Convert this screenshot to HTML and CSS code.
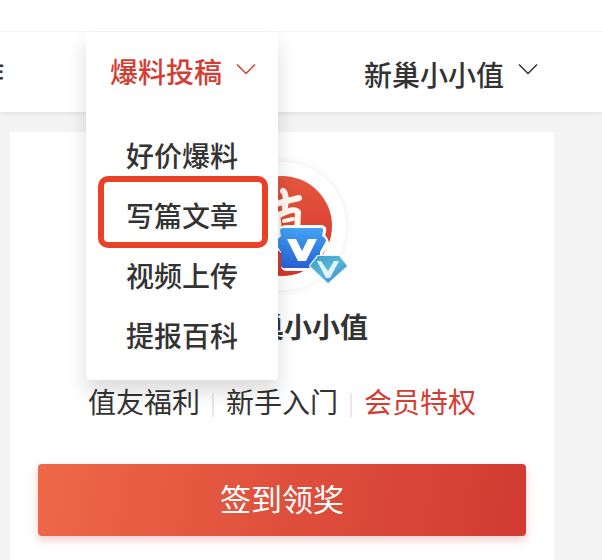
FILE: index.html
```html
<!DOCTYPE html>
<html lang="zh-CN">
<head>
<meta charset="utf-8">
<title>新巢小小值</title>
<link rel="stylesheet" href="styles.css">
</head>
<body>
<div class="topbar"></div>
<header class="header">
  <nav class="nav">
    <a class="nav-cut" href="#">合作</a>
    <div class="menu">
      <button class="menu-trigger" type="button">爆料投稿
        <svg class="chevron" viewBox="0 0 20 12"><path d="M1 1.500 10 10.500 19 1.500"/></svg>
      </button>
      <div class="menu-panel">
        <a class="menu-item" href="#">好价爆料</a>
        <a class="menu-item menu-item-marked" href="#">写篇文章</a>
        <a class="menu-item" href="#">视频上传</a>
        <a class="menu-item" href="#">提报百科</a>
      </div>
    </div>
    <button class="user" type="button">新巢小小值
      <svg class="chevron" viewBox="0 0 20 12"><path d="M1 1.500 10 10.500 19 1.500"/></svg>
    </button>
  </nav>
</header>
<main class="card">
  <div class="avatar">
    <svg class="avatar-art" viewBox="0 0 132 132">
      <defs>
        <linearGradient id="blue" x1="0" y1="0" x2="0" y2="1"><stop offset="0" stop-color="#43a3f5"/><stop offset="1" stop-color="#2760d4"/></linearGradient>
        <linearGradient id="teal" x1="0" y1="0" x2="1" y2="1"><stop offset="0" stop-color="#3ba0bd"/><stop offset=".5" stop-color="#56b5d8"/><stop offset="1" stop-color="#3480cc"/></linearGradient>
        <linearGradient id="red" x1="0" y1="0" x2="0" y2="1"><stop offset="0" stop-color="#e3563f"/><stop offset="1" stop-color="#d63429"/></linearGradient>
      </defs>
      <circle cx="64" cy="64" r="50" fill="url(#red)"/>
      <g fill="none" stroke="#fff8f0" stroke-width="5" stroke-linecap="round" stroke-linejoin="round">
        <path d="M48 28 38 50M43 42V88"/>
        <path d="M65 29Q69 31 67 46M54 43Q72 38 81 36" stroke-width="6"/>
        <path d="M59 52 62 76M61 53Q76 45 80 50L79 72" stroke-width="6"/>
        <path d="M66 59 75 57" stroke-width="4"/>
      </g>
      <path d="M68 66H103Q106 66 105 69L104 74Q108 78 108 82Q106 87 102 90V103Q102 106 99 106H69Q66 106 66 103V90Q62 87 60 82Q60 78 65 74L65 69Q65 66 68 66Z" fill="#fff" stroke="#fff" stroke-width="6" stroke-linejoin="round"/>
      <path d="M65 66H103Q106 66 105 69L104 74Q108 76 108 79L102 90V103Q102 106 99 106H66Q63 106 63 103V90L58 82Q58 78 63 74L62 69Q62 66 65 66Z" fill="url(#blue)"/>
      <path d="M69 77H78L84 89 90 77H99L88 99H80Z" fill="#fff"/>
      <path d="M100 95H121L128 104 110 120 93 104Z" fill="#e6f4fc" stroke="#e6f4fc" stroke-width="4" stroke-linejoin="round"/>
      <path d="M100 94H121L129 104 110 121 92 104Z" fill="url(#teal)"/>
      <path d="M99 99 103 99 110 109 116 99 121 99 112 116H108Z" fill="#dff3fb"/>
    </svg>
  </div>
  <h1 class="name">新巢小小值</h1>
  <div class="links">
    <a href="#">值友福利</a><span class="divider"></span><a href="#">新手入门</a><span class="divider"></span><a class="accent" href="#">会员特权</a>
  </div>
  <button class="checkin" type="button">签到领奖</button>
</main>
</body>
</html>
```
FILE: styles.css
```css
* { box-sizing: border-box; }
body {
  margin: 0;
  min-height: 100vh;
  display: flex;
  flex-direction: column;
  overflow: hidden;
  background: #f4f4f4;
  color: #333;
  font: 500 28px/40px "Noto Sans CJK SC", sans-serif;
}
a { color: inherit; text-decoration: none; }
button {
  border: 0;
  padding: 0;
  background: none;
  color: inherit;
  font: inherit;
  cursor: pointer;
}
.topbar { height: 32px; background: #fff; border-bottom: 1px solid #f8f8f8; }
.header {
  position: relative;
  z-index: 2;
  background: #fff;
  box-shadow: 0 2px 4px rgba(0, 0, 0, .07);
}
.nav { display: flex; height: 80px; align-items: center; }
.nav-cut {
  display: flex;
  justify-content: flex-end;
  width: 4px;
  margin: 0 82px 0 0;
  overflow: hidden;
  white-space: nowrap;
}
.menu {
  position: relative;
  width: 192px;
  height: 80px;
}
.menu-trigger {
  position: relative;
  z-index: 1;
  display: flex;
  align-items: center;
  gap: 14px;
  width: 100%;
  height: 78px;
  padding: 0 0 0 24px;
  color: #d43d33;
}
.chevron {
  width: 20px;
  height: 12px;
  margin-bottom: 4px;
  fill: none;
  stroke: currentColor;
  stroke-width: 1.5;
}
.menu-panel {
  position: absolute;
  top: 0;
  left: 0;
  width: 100%;
  padding: 93px 12px 15px;
  border-radius: 0 0 4px 4px;
  background: #fff;
  box-shadow: 0 12px 20px rgba(0, 0, 0, .14);
}
.menu-item {
  position: relative;
  display: block;
  line-height: 60px;
  text-align: center;
}
.menu-item-marked::after {
  content: "";
  position: absolute;
  inset: -9px -2px -3px 0;
  border: 6px solid #eb4028;
  border-radius: 10px;
}
.user {
  display: flex;
  align-items: center;
  gap: 14px;
  padding: 4px 0 0 86px;
}
.user .chevron { margin-bottom: 10px; }
.card {
  flex: 1;
  margin: 20px 48px 0 10px;
  padding: 30px 28px 24px;
  background: #fff;
}
.avatar {
  width: 128px;
  height: 128px;
  margin: 0 auto;
  border-radius: 50%;
  background: #fff;
  box-shadow: 0 0 10px rgba(0, 0, 0, .08);
}
.avatar-art { display: block; width: 132px; height: 132px; }
.name {
  margin: 16px 0 0;
  padding-left: 32px;
  font-size: 28px;
  line-height: 40px;
  text-align: center;
}
.links {
  display: flex;
  justify-content: center;
  align-items: flex-start;
  gap: 12px;
  margin-top: 35px;
  font-weight: 400;
}
.divider { width: 2px; height: 24px; margin-top: 12px; background: #e8e8e8; }
.accent { color: #d43d33; }
.checkin {
  display: block;
  width: 100%;
  height: 72px;
  margin-top: 43px;
  padding-bottom: 4px;
  border-radius: 4px;
  background: linear-gradient(100deg, #ee6848, #df503c 50%, #d23a32);
  box-shadow: 0 4px 10px rgba(212, 61, 51, .25);
  color: #fff;
  font-size: 31px;
  font-weight: 400;
}
```
